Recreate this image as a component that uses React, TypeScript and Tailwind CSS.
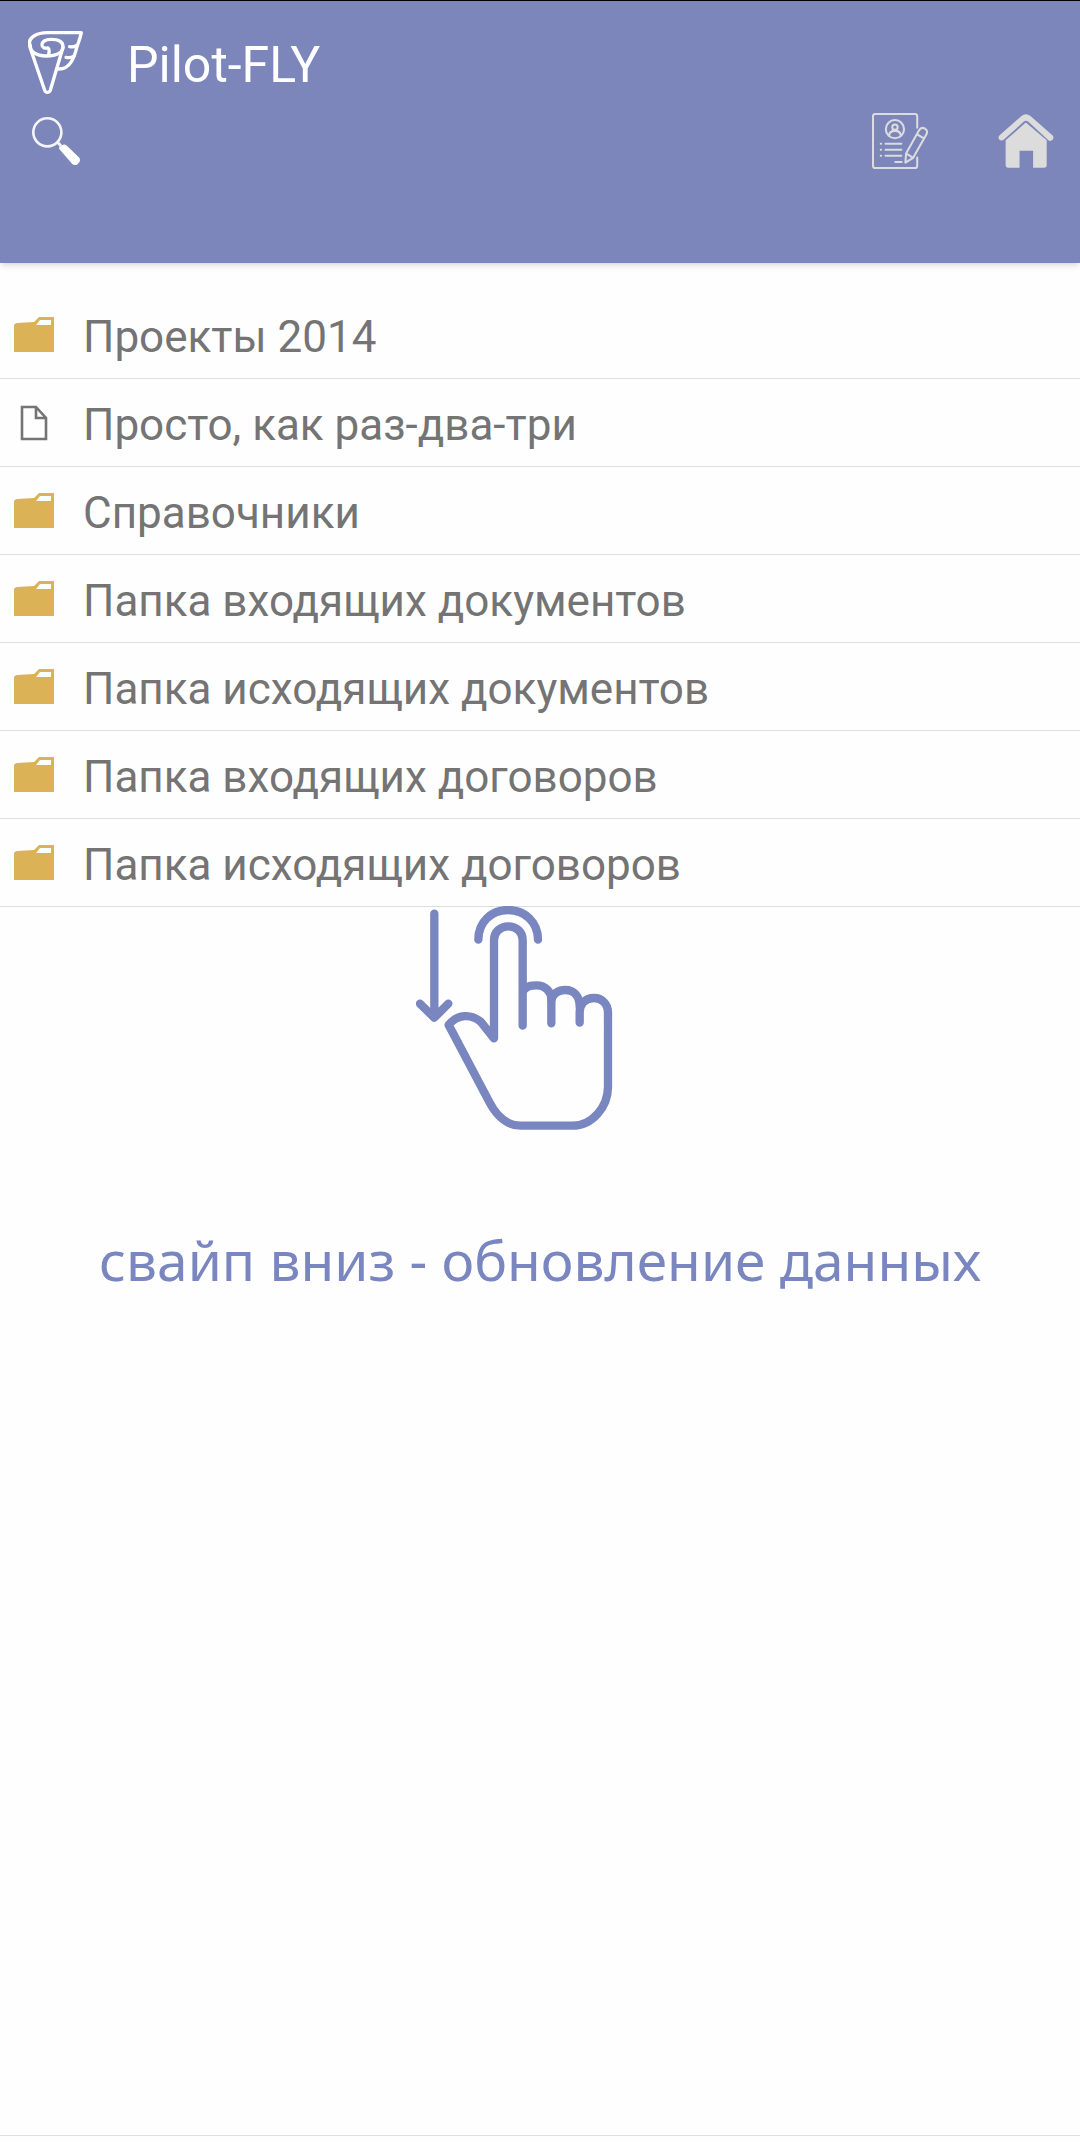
import React from "react";

type Item = { kind: "folder" | "file"; name: string };

const items: Item[] = [
  { kind: "folder", name: "Проекты 2014" },
  { kind: "file", name: "Просто, как раз-два-три" },
  { kind: "folder", name: "Справочники" },
  { kind: "folder", name: "Папка входящих документов" },
  { kind: "folder", name: "Папка исходящих документов" },
  { kind: "folder", name: "Папка входящих договоров" },
  { kind: "folder", name: "Папка исходящих договоров" },
];

function Logo() {
  return (
    <svg viewBox="24 33 165 189" className="h-[63px] w-[55px] shrink-0" fill="none" stroke="#fff" strokeWidth="10" strokeLinecap="round" strokeLinejoin="round" aria-hidden="true">
      <path d="M30 76 C22 52 52 38 82 38 H184 C180 58 175 68 171 80 C163 113 150 148 116 147" />
      <path d="M30 76 C28 92 46 108 79 108 C112 108 129 96 129 80 C129 62 112 58 93 58 C75 58 66 66 66 74 C66 83 74 86 84 84 C90 88 87 95 86 106" />
      <path d="M30 76 L34 94 L74 211 Q76 217 82 217 Q89 217 91 211 L129 82" />
      <path d="M171 76 Q163 82 149 80 M162 108 Q152 115 138 112" />
    </svg>
  );
}

function SearchIcon() {
  return (
    <svg viewBox="33 33 147 147" className="size-12" aria-hidden="true">
      <circle cx="80" cy="80" r="43" fill="none" stroke="#f4f5fb" strokeWidth="8" />
      <path d="M110 109 L122 122" stroke="#f4f5fb" strokeWidth="9" />
      <path d="M117 132 Q114 127 119 123 L128 118 Q134 115 139 120 L178 158 Q181 163 179 170 L171 179 Q164 181 157 178 Z" fill="#fff" />
    </svg>
  );
}

function ReportIcon() {
  return (
    <svg viewBox="36 38 166 166" className="size-14" fill="none" stroke="#dcdcdf" strokeWidth="6" strokeLinecap="round" strokeLinejoin="round" aria-hidden="true">
      <path d="M170 82 V48 Q170 41 163 41 H46 Q39 41 39 48 V194 Q39 201 46 201 H163 Q170 201 170 194 V170" />
      <circle cx="104" cy="86" r="27" />
      <circle cx="104" cy="80" r="8" />
      <path d="M87 105 Q87 91 104 91 Q121 91 121 105" />
      <path d="M76 129 H123 M76 147 H123 M76 165 H123 M105 183 H124 M62 129 H63 M62 147 H63 M62 165 H63" />
      <path d="M135 185 L137 158 L175 90 Q182 78 193 84 Q203 91 197 102 L158 171 Z M169 101 L190 113 M137 158 L158 171" />
    </svg>
  );
}

function HomeIcon() {
  return (
    <svg viewBox="38 40 167 163" className="h-[54px] w-14" fill="#dcdcdd" aria-hidden="true">
      <path d="M60 195 V119 L121 66 L184 119 V194 Q184 202 176 202 H143 V151 H102 V202 H67 Q60 202 60 195 Z" />
      <path d="M41 105 L108 46 Q121 36 135 46 L202 105 Q206 110 203 116 Q196 125 189 119 L128 63 Q121 58 115 63 L54 118 Q46 123 40 116 Q37 110 41 105 Z" />
    </svg>
  );
}

function FolderIcon() {
  return (
    <svg viewBox="0 0 40 35" className="h-[35px] w-10" aria-hidden="true">
      <path fill="#dbb256" fillRule="evenodd" d="M0 35 V8 Q1 6 3 6 L20 5 L25 0 H40 V35 Z M22 8 H37 V3 H26 Z" />
    </svg>
  );
}

function FileIcon() {
  return (
    <svg viewBox="0 0 28 36" className="h-9 w-7" fill="none" stroke="#747474" strokeWidth="2.6" aria-hidden="true">
      <path d="M2 2 H16 L26 13 V34 H2 Z M16 2 V13 H26" />
    </svg>
  );
}

function SwipeDownHand() {
  return (
    <svg viewBox="49 48 744 672" className="h-56 w-[248px]" fill="none" stroke="#7986c0" strokeWidth="25" strokeLinecap="round" strokeLinejoin="round" aria-hidden="true">
      <path d="M104 71 V380 M61 341 L104 383 L146 341" />
      <path d="M236 149 C236 96 275 60 325 60 C375 60 415 96 415 149" />
      <path d="M369 407 V150 C369 126 350 109 326 109 C302 109 283 126 283 150 V445 L243 395 C214 371 174 372 147 405 L270 638 C292 680 325 707 363 707 H518 C578 707 625 650 625 590 V368 C625 342 607 324 583 324 C557 324 540 342 540 366 V398" />
      <path d="M372 300 C385 287 394 286 411 286 C437 286 455 305 455 328 V400" />
      <path d="M455 330 C460 310 477 300 497 300 C522 300 540 318 540 350" />
    </svg>
  );
}

export default function App() {
  return (
    <div className="flex min-h-screen flex-col bg-[#fefefe] font-[Roboto,sans-serif]">
      <header className="border-t border-black bg-[#7d86ba] pr-[26px] pl-7 pt-[30px] pb-[94px] shadow-md shadow-black/10">
        <div className="flex h-[68px] items-start gap-11">
          <Logo />
          <h1 className="text-[50px] leading-[68px] text-white">Pilot-FLY</h1>
        </div>
        <nav className="mt-[14px] flex items-center">
          <button type="button" aria-label="Поиск" className="flex size-14 items-center justify-center">
            <SearchIcon />
          </button>
          <button type="button" aria-label="Задания" className="mr-[70px] ml-auto">
            <ReportIcon />
          </button>
          <button type="button" aria-label="Домой">
            <HomeIcon />
          </button>
        </nav>
      </header>

      <main className="flex grow flex-col pt-7">
        <ul>
          {items.map((item) => (
            <li key={item.name} className="border-b border-[#dedede]">
              <button type="button" className="flex h-[87px] w-full items-center gap-[29px] px-[14px] text-left">
                <span className="flex w-10 shrink-0 justify-center">
                  {item.kind === "folder" ? <FolderIcon /> : <FileIcon />}
                </span>
                <span className="pt-1 text-[44px] leading-[52px] text-[#747474]">{item.name}</span>
              </button>
            </li>
          ))}
        </ul>
        <div className="-mt-px flex flex-col items-center">
          <SwipeDownHand />
          <p className="mt-[90px] text-center font-['Noto_Sans',sans-serif] text-[55px] leading-[80px] whitespace-nowrap text-[#7986c0]">
            свайп вниз - обновление данных
          </p>
        </div>
      </main>

      <footer className="h-[7px] border-t border-[#e0e0e0]" />
    </div>
  );
}
